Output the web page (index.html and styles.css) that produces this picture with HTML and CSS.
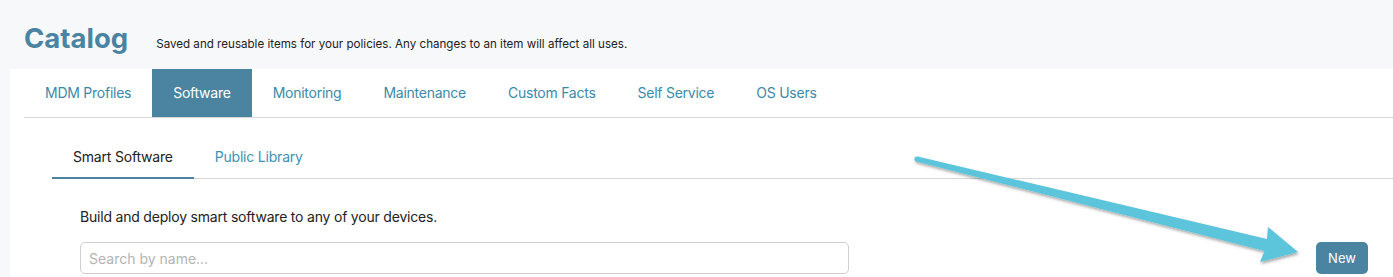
FILE: index.html
```html
<!DOCTYPE html>
<html>

<head>
    <meta charset="UTF-8">
    <title>Catalog</title>
    <link rel="stylesheet" href="styles.css">
</head>

<body>
    <div class="page">
        <div class="header">
            <h1>Catalog</h1>
            <p class="subtitle">Saved and reusable items for your policies. Any changes to an item will affect all uses.</p>
        </div>
        <div class="card">
            <ul class="tabs">
                <li>MDM Profiles</li>
                <li class="active">Software</li>
                <li>Monitoring</li>
                <li>Maintenance</li>
                <li>Custom Facts</li>
                <li>Self Service</li>
                <li>OS Users</li>
            </ul>
            <div class="panel">
                <ul class="subtabs">
                    <li class="active">Smart Software</li>
                    <li>Public Library</li>
                </ul>
                <div class="content">
                    <p class="intro">Build and deploy smart software to any of your devices.</p>
                    <div class="toolbar">
                        <input class="search" type="text" placeholder="Search by name...">
                        <button class="new-button">New</button>
                    </div>
                </div>
            </div>
        </div>
    </div>

    <!-- annotation arrow -->
    <svg class="annotation" width="1393" height="277" viewBox="0 0 1393 277">
        <defs>
            <filter id="shadow" x="-5%" y="-20%" width="110%" height="160%">
                <feDropShadow dx="1" dy="2" stdDeviation="1.5" flood-color="#000" flood-opacity="0.35" />
            </filter>
        </defs>
        <g filter="url(#shadow)" fill="#5bc5db">
            <circle cx="917" cy="159" r="2.6" />
            <polygon points="917.6,156.5 1267,239 1268,227 1298,252 1260,262 1264.5,251 916.4,161.5" />
        </g>
    </svg>
</body>

</html>
```

FILE: styles.css
```css
body {
    margin: 0;
    background: #f7f8fa;
    font-family: Inter, "Liberation Sans", Arial, sans-serif;
    color: #222;
    overflow: hidden;
}

.page {
    position: relative;
    width: 1393px;
    height: 277px;
}

.header {
    display: flex;
    align-items: baseline;
    height: 69px;
    padding-left: 24px;
    box-sizing: border-box;
}

.header h1 {
    margin: 0;
    padding-top: 21px;
    font-size: 27.5px;
    font-weight: 700;
    color: #4a84a2;
}

.subtitle {
    margin: 0 0 0 28px;
    font-size: 11.6px;
    color: #222;
}

.card {
    margin-left: 10px;
    background: white;
    height: 208px;
    padding-left: 14px;
}

.tabs {
    display: flex;
    margin: 0;
    padding: 0;
    list-style: none;
    border-bottom: 1px solid #d6d6d6;
}

.tabs li {
    height: 48px;
    line-height: 48px;
    padding: 0 21px;
    font-size: 14px;
    color: #3b8aaa;
    letter-spacing: -0.25px;
}

.tabs li.active {
    background: #4a84a0;
    color: white;
}

.panel {
    padding: 19px 0 0 28px;
}

.subtabs {
    display: flex;
    margin: 0;
    padding: 0;
    list-style: none;
    border-bottom: 1px solid #d6d6d6;
}

.subtabs li {
    height: 41px;
    line-height: 40px;
    padding: 0 21px;
    font-size: 14px;
    color: #3d92b4;
    letter-spacing: -0.2px;
}

.subtabs li.active {
    color: #222;
    border-bottom: 2px solid #4a84a0;
    margin-bottom: -1px;
    height: 40px;
}

.content {
    padding: 0 25px 0 28px;
}

.intro {
    margin: 0;
    padding-top: 29px;
    height: 34px;
    font-size: 14px;
    color: #222;
    letter-spacing: -0.2px;
}

.toolbar {
    display: flex;
    justify-content: space-between;
    align-items: flex-start;
}

.search {
    width: 769px;
    height: 32px;
    box-sizing: border-box;
    padding: 0 8px;
    border: 1px solid #cfcfcf;
    border-radius: 5px;
    font-family: Inter, "Liberation Sans", Arial, sans-serif;
    font-size: 14px;
    color: #222;
    outline: none;
}

.search::placeholder {
    color: #b4b4b4;
}

.new-button {
    width: 52px;
    height: 32px;
    border: none;
    border-radius: 5px;
    background: #4a84a0;
    color: white;
    font-family: Inter, "Liberation Sans", Arial, sans-serif;
    font-size: 13px;
    cursor: pointer;
}

.annotation {
    position: absolute;
    top: 0;
    left: 0;
    pointer-events: none;
}
```
